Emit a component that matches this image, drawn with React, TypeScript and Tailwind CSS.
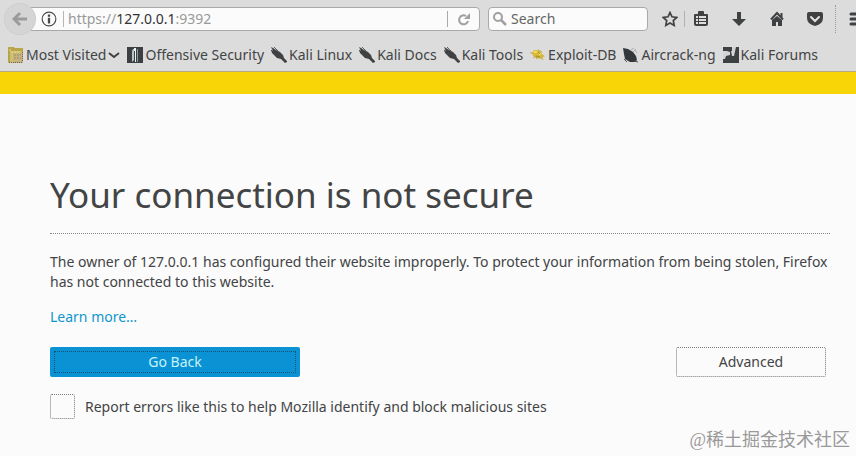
import type { ReactNode } from 'react'

interface Bookmark {
  label: string
  icon: ReactNode
  menu?: boolean
}

function FolderIcon() {
  return (
    <svg viewBox="0 0 16 16" className="size-4 shrink-0" aria-hidden="true">
      <path d="M0 0h6l1 1h8v5H0z" fill="#b9a64c" />
      <path d="M0 4h14v12H0z" fill="#cfc06a" />
      <path d="M0 1h2v14H0z" fill="#b5a34f" />
      <path d="M5 6h10v10H5z" fill="#c5b384" />
      <path d="M1 15.500h14M14.500 5v10" fill="none" stroke="#7d5f50" strokeDasharray="1 1" />
      <path d="M6 8h7M6 11h7" stroke="#a58a55" strokeDasharray="2 1" />
      <path d="M1 3h3M3 5h9" stroke="#e8db85" strokeDasharray="2 1" />
    </svg>
  )
}

function OffsecIcon() {
  return (
    <svg viewBox="0 0 16 16" className="size-4 shrink-0" aria-hidden="true">
      <path d="M0 0h16v16H0z" fill="#3d4043" />
      <path d="M6 2h1v11l-2 2V4z" fill="#b9c6c6" />
      <path d="M7 1h2v14H8V4H7z" fill="#eef4f4" />
      <path d="M10 2h1v13h-1z" fill="#8b9a9b" />
    </svg>
  )
}

function KaliIcon() {
  return (
    <svg viewBox="0 0 16 16" className="size-4 shrink-0" aria-hidden="true">
      <path d="M0 0l2 1 3 2 4 2 3 3 1 3 3 3v1l-2 1-4-4-4-1-3-3-2-2-1-3 2 1z" fill="#3f4142" />
      <path d="M3 0l4 4M0 3l4 3" stroke="#3f4142" strokeWidth=".8" />
    </svg>
  )
}

function BugIcon() {
  return (
    <svg viewBox="0 0 16 16" className="size-4 shrink-0" aria-hidden="true">
      <path d="M2 6l2-3h4l3 2 2 3v3l-3 1-4-1-3-2z" fill="#d9bb35" />
      <path d="M0 6h3M3 11l3-2M6 12l2-2M11 10l2 3M13 8l1 2M8 3l4 2" stroke="#b29c52" strokeWidth=".8" />
      <path d="M4 4h3v2H4zM9 6h2v2H9z" fill="#f2dc67" />
      <path d="M6 9l4 1M8 5l2 2" stroke="#9b7d2a" strokeWidth=".8" />
    </svg>
  )
}

function AircrackIcon() {
  return (
    <svg viewBox="0 0 16 16" className="size-4 shrink-0" aria-hidden="true">
      <path d="M0 1l5 1 5 3 3 4 1 4-2 2H7l-5-3-1-5z" fill="#34383b" />
      <path d="M8 3l3-2M10 5l3-3M12 3l2 3" stroke="#a8aeb4" />
      <path d="M1 12l3 3M11 14l4 1" stroke="#4b5054" />
    </svg>
  )
}

function ForumsIcon() {
  return (
    <svg viewBox="0 0 16 16" className="size-4 shrink-0" aria-hidden="true">
      <path d="M0 0h16v16H0z" fill="#3e4142" />
      <path d="M0 4h4l3 1v3L3 9H0zM0 9h3l-1 3H0z" fill="#d4d4d4" />
      <path d="M9 0h4l-2 9H9L8 4h1z" fill="#d4d4d4" />
    </svg>
  )
}

const BOOKMARKS: Bookmark[] = [
  { label: 'Most Visited', icon: <FolderIcon />, menu: true },
  { label: 'Offensive Security', icon: <OffsecIcon /> },
  { label: 'Kali Linux', icon: <KaliIcon /> },
  { label: 'Kali Docs', icon: <KaliIcon /> },
  { label: 'Kali Tools', icon: <KaliIcon /> },
  { label: 'Exploit-DB', icon: <BugIcon /> },
  { label: 'Aircrack-ng', icon: <AircrackIcon /> },
  { label: 'Kali Forums', icon: <ForumsIcon /> },
]

function AddressBar() {
  return (
    <div className="flex h-6 min-w-0 flex-1 items-center">
      <button
        aria-label="Back"
        className="relative z-10 -mr-2 flex size-8 shrink-0 items-center justify-center rounded-full border border-dotted border-[#c4c4c4] bg-[#d5d5d5]"
      >
        <svg viewBox="0 0 16 16" className="size-4" aria-hidden="true">
          <path d="M8 2L2 8l6 6M3 8h12" fill="none" stroke="#9b9b9b" strokeWidth="3" />
        </svg>
      </button>
      <div className="flex h-6 min-w-0 flex-1 items-center rounded-r-sm border border-[#a9a9a9] bg-[#fbfbfb] pl-3">
        <svg viewBox="0 0 14 14" className="size-4 shrink-0" aria-hidden="true">
          <circle cx="7" cy="7" r="6" fill="none" stroke="#4a4a4a" />
          <path d="M7 3v2M7 6v5" stroke="#4a4a4a" strokeWidth="2" />
        </svg>
        <span className="ml-1.5 h-4 w-px shrink-0 bg-[#b5b5b5]" />
        <div className="ml-1 flex-1 truncate text-[#999]">
          https://<span className="text-[#333]">127.0.0.1</span>:9392
        </div>
        <button aria-label="Reload" className="flex h-4 w-8 items-center justify-center border-l border-[#a9a9a9]">
          <svg viewBox="0 0 14 14" className="size-3.5" aria-hidden="true">
            <path d="M9 4a4.500 4.500 0 1 0 2 5" fill="none" stroke="#a0a0a0" strokeWidth="2" />
            <path d="M13 1v6H7z" fill="#a0a0a0" />
          </svg>
        </button>
      </div>
    </div>
  )
}

function ToolbarButtons() {
  return (
    <div className="flex h-7 shrink-0 items-center text-[#3f4142]">
      <button aria-label="Bookmark this page">
        <svg viewBox="0 0 16 16" className="size-4" aria-hidden="true">
          <path d="M8 1.500l2 4.300 4.800.6-3.500 3.200.9 4.800L8 12l-4.200 2.400.9-4.800L1.200 6.400 6 5.800z" fill="none" stroke="currentColor" strokeWidth="1.700" />
        </svg>
      </button>
      <span className="ml-1.5 h-4 w-px bg-[#b2b2b2]" />
      <button aria-label="Show bookmarks" className="ml-2">
        <svg viewBox="0 0 16 16" className="size-4" aria-hidden="true">
          <path d="M1 4q0-1 1-1h3V1q0-1 1-1h4q1 0 1 1v2h3q1 0 1 1v9q0 2-2 2H3q-2 0-2-2z" fill="currentColor" />
          <path d="M3 5h2v2H3zM3 8h2v2H3zM3 11h2v2H3zM6 5h7v2H6zM6 8h7v2H6zM6 11h7v2H6z" fill="#dedede" />
        </svg>
      </button>
      <button aria-label="Downloads" className="ml-[22px]">
        <svg viewBox="0 0 16 16" className="size-4" aria-hidden="true">
          <path d="M6 1h4v7h5l-7 7-7-7h5z" fill="currentColor" />
        </svg>
      </button>
      <button aria-label="Home" className="ml-[22px]">
        <svg viewBox="0 0 16 16" className="size-4" aria-hidden="true">
          <path d="M2 8.500L8 2l6 6.500M12.500 2v4" fill="none" stroke="currentColor" strokeWidth="2" />
          <path d="M8 5l5 4v6H9v-4H7v4H3V9z" fill="currentColor" />
        </svg>
      </button>
      <button aria-label="Save to Pocket" className="ml-[22px]">
        <svg viewBox="0 0 16 16" className="size-4" aria-hidden="true">
          <path d="M0 3q0-2 2-2h12q2 0 2 2v4q0 6-8 8-8-2-8-8z" fill="currentColor" />
          <path d="M4 6l4 4 4-4" fill="none" stroke="#e4e4e4" strokeWidth="2" strokeLinecap="round" />
        </svg>
      </button>
      <span className="ml-3 h-7 w-px border-l border-dotted border-[#999]" />
      <button aria-label="Open menu" className="ml-3 w-2 overflow-hidden">
        <svg viewBox="0 0 16 16" className="size-4" aria-hidden="true">
          <path d="M3 3h13M3 8h13M3 13h13" stroke="currentColor" strokeWidth="3" strokeLinecap="round" />
        </svg>
      </button>
    </div>
  )
}

function BookmarksBar() {
  return (
    <nav className="flex h-[33px] items-center gap-[7px] overflow-hidden px-2">
      {BOOKMARKS.map(b => (
        <button key={b.label} className="flex shrink-0 items-center gap-0.5 whitespace-nowrap">
          {b.icon}
          <span>{b.label}</span>
          {b.menu && (
            <svg viewBox="0 0 12 12" className="size-3" aria-hidden="true">
              <path d="M1 4l5 4 5-4" fill="none" stroke="#3f4142" strokeWidth="2" />
            </svg>
          )}
        </button>
      ))}
    </nav>
  )
}

export default function App() {
  return (
    <div className="relative flex min-h-screen flex-col bg-[#fbfbfb] font-['Noto_Sans',sans-serif] text-[14px] leading-5 text-[#424445]">
      <header className="border-b border-[#b5aa83] bg-[#dcdcdc]">
        <div className="flex h-[38px] items-center pl-1">
          <AddressBar />
          <label className="ml-2 mr-3.5 flex h-6 w-40 shrink-0 items-center rounded-sm border border-[#a9a9a9] bg-[#fbfbfb] pl-1">
            <svg viewBox="0 0 14 14" className="size-3.5 shrink-0" aria-hidden="true">
              <circle cx="5" cy="5" r="4" fill="none" stroke="#a0a0a0" strokeWidth="2" />
              <path d="M8 8l5 5" stroke="#a0a0a0" strokeWidth="2.500" />
            </svg>
            <input
              type="text"
              aria-label="Search"
              placeholder="Search"
              className="ml-1 min-w-0 flex-1 bg-transparent outline-none placeholder:text-[#666]"
            />
          </label>
          <ToolbarButtons />
        </div>
        <BookmarksBar />
      </header>
      <div className="h-[22px] bg-[#f7d506]" />

      <main className="pl-[50px] pr-[26px] pt-[74px]">
        <h1 className="border-b border-dotted border-[#858585] pb-[11px] text-[35px] leading-[54px]">
          Your connection is not secure
        </h1>
        <p className="mt-[18px]">
          The owner of 127.0.0.1 has configured their website improperly. To protect your information from being stolen,
          Firefox has not connected to this website.
        </p>
        <p className="mt-[15px]">
          <a href="#learn-more" className="text-[#1096cd]">Learn more…</a>
        </p>

        <div className="mt-5 flex items-center justify-between pr-1">
          <button className="h-[30px] w-[250px] rounded-xs bg-[#0b92d4] p-1 text-[#c4f3fa]">
            <span className="flex h-full items-center justify-center border border-dotted border-[#12506f]">Go Back</span>
          </button>
          <button className="h-[30px] w-[150px] rounded-xs border border-dotted border-[#777]">Advanced</button>
        </div>

        <label className="mt-[17px] flex items-center gap-2.5">
          <input
            type="checkbox"
            className="size-[25px] shrink-0 appearance-none rounded-xs border border-dotted border-[#777] checked:bg-[#0b92d4]"
          />
          Report errors like this to help Mozilla identify and block malicious sites
        </label>
      </main>

      <div className="absolute bottom-1 right-1.5 font-['Liberation_Serif','Noto_Sans_CJK_SC',serif] text-[18px] leading-6 text-[#999]">
        @稀土掘金技术社区
      </div>
    </div>
  )
}
